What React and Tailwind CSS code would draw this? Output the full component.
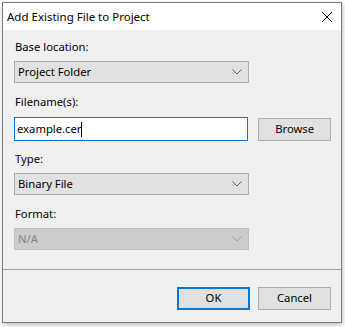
import React from 'react'

const font = { fontFamily: '"Noto Sans", "Open Sans", sans-serif' }

function Chevron({ color = '#606060' }) {
  return (
    <svg width="10" height="6" viewBox="0 0 10 6" fill="none" stroke={color} strokeWidth="1">
      <polyline points="0.5,0.5 5,5 9.5,0.5" />
    </svg>
  )
}

function Select({ value, disabled }) {
  return (
    <div
      className={
        'flex items-center justify-between w-[235px] h-[22px] border pl-[3px] pr-[6px] ' +
        (disabled
          ? 'bg-[#cccccc] border-[#bfbfbf] text-[#838383]'
          : 'bg-[#e1e1e1] border-[#adadad] text-black')
      }
    >
      <span className="leading-[16px]">{value}</span>
      <Chevron color={disabled ? '#a0a0a0' : '#606060'} />
    </div>
  )
}

function Button({ label, primary }) {
  return (
    <div
      className={
        'flex items-center justify-center w-[73px] h-[23px] bg-[#e1e1e1] ' +
        (primary ? 'border-2 border-[#0078d7]' : 'border border-[#adadad]')
      }
    >
      {label}
    </div>
  )
}

export default function App() {
  return (
    <div className="w-[345px] h-[327px] bg-white pl-[2px] pt-[2px] text-[11.25px] text-black" style={font}>
      <div className="w-[340px] h-[321px] border border-[#7a7a7a] bg-[#f0f0f0] flex flex-col shadow-[1px_2px_5px_rgba(0,0,0,0.25)]">
        {/* title bar */}
        <div className="h-[27px] bg-white flex items-center justify-between pl-[4px] pr-[8px]">
          <span className="text-[11.5px]">Add Existing File to Project</span>
          <svg width="12" height="12" viewBox="0 0 12 12" stroke="#000" strokeWidth="1">
            <line x1="1" y1="1" x2="11" y2="11" />
            <line x1="11" y1="1" x2="1" y2="11" />
          </svg>
        </div>

        <div className="flex flex-col pl-[11px] pr-[10px]">
          <div className="mt-[9px] pl-[1px] leading-[16px]">Base location:</div>
          <div className="mt-[6px]">
            <Select value="Project Folder" />
          </div>

          <div className="mt-[11px] pl-[1px] leading-[16px]">Filename(s):</div>
          <div className="mt-[7px] flex items-center gap-[10px]">
            <div className="w-[235px] h-[24px] bg-white border border-[#0078d7] flex items-center pl-[2px]">
              <span className="leading-[16px]">example.cer</span>
              <span className="w-[1px] h-[15px] bg-black" />
            </div>
            <Button label="Browse" />
          </div>

          <div className="mt-[10px] pl-[1px] leading-[16px]">Type:</div>
          <div className="mt-[6px]">
            <Select value="Binary File" />
          </div>

          <div className="mt-[11px] pl-[1px] leading-[16px]">Format:</div>
          <div className="mt-[6px]">
            <Select value="N/A" disabled />
          </div>
        </div>

        <div className="mt-[19px] h-[1px] bg-[#a0a0a0]" />

        <div className="mt-[17px] flex justify-end gap-[8px] pr-[10px]">
          <Button label="OK" primary />
          <Button label="Cancel" />
        </div>
      </div>
    </div>
  )
}
